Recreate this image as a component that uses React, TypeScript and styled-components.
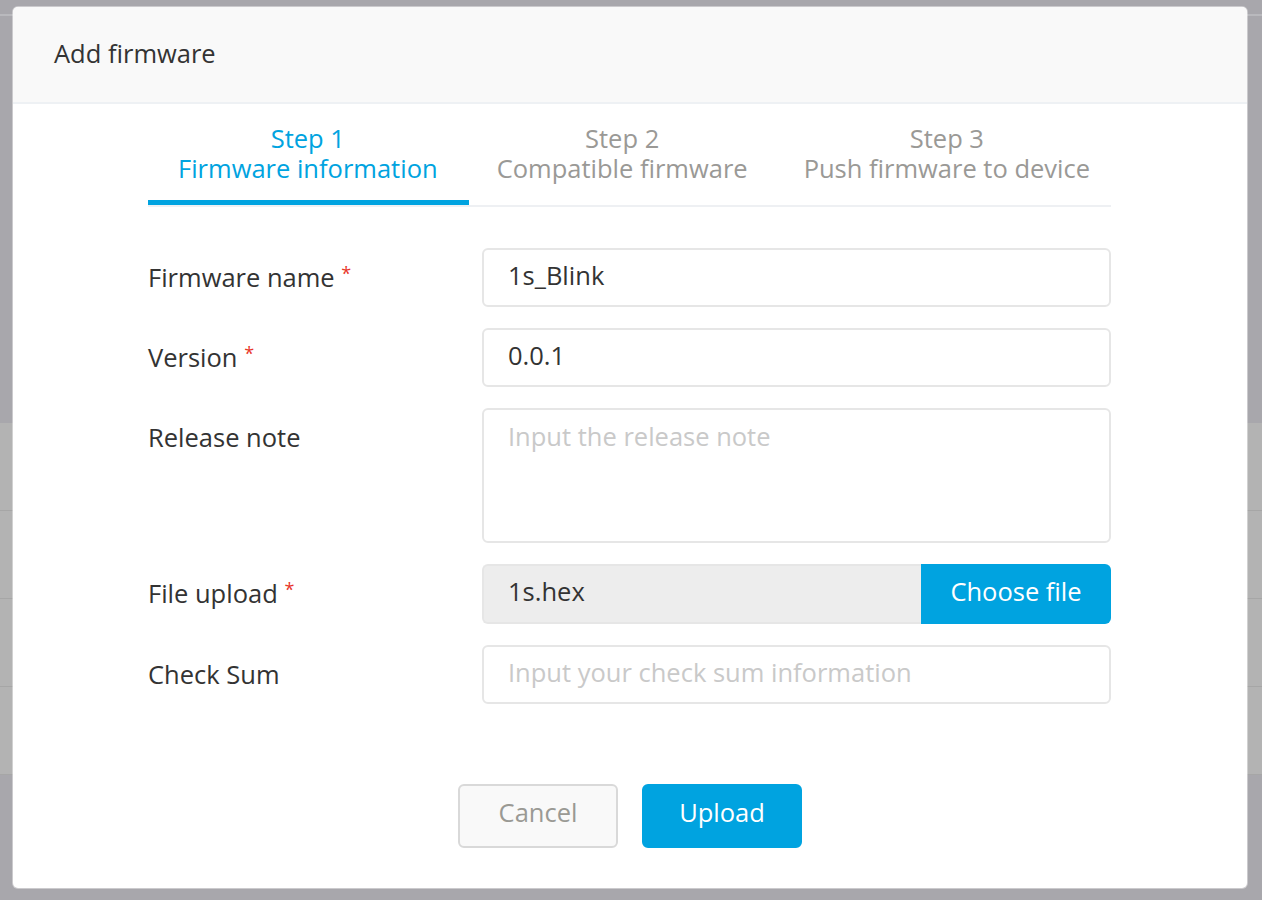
import React from "react";
import styled, { createGlobalStyle } from "styled-components";

const GlobalStyle = createGlobalStyle`
  html, body {
    margin: 0;
    padding: 0;
    height: 100%;
    background: #a8a7ac;
    font-family: "Open Sans", "Noto Sans", sans-serif;
  }
`;

const steps = [
  { title: "Step 1", subtitle: "Firmware information" },
  { title: "Step 2", subtitle: "Compatible firmware" },
  { title: "Step 3", subtitle: "Push firmware to device" },
];

const App = () => {
  return (
    <>
      <GlobalStyle />
      <Backdrop>
        <TopRule />
        <BackTable>
          <BackRow />
          <BackRow />
          <BackRow />
          <BackRow />
        </BackTable>
      </Backdrop>

      <Overlay>
        <Modal>
          <Header>
            <Title>Add firmware</Title>
          </Header>

          <Body>
            <Tabs>
              {steps.map((s, i) => (
                <Tab key={s.title} active={i === 0}>
                  <StepLine>{s.title}</StepLine>
                  <StepLine>{s.subtitle}</StepLine>
                </Tab>
              ))}
            </Tabs>

            <Form>
              <Label>
                Firmware name <Req>*</Req>
              </Label>
              <Input defaultValue="1s_Blink" />

              <Label>
                Version <Req>*</Req>
              </Label>
              <Input defaultValue="0.0.1" />

              <Label>Release note</Label>
              <TextArea placeholder="Input the release note" />

              <Label>
                File upload <Req>*</Req>
              </Label>
              <FileBox>
                <FileName>1s.hex</FileName>
                <ChooseButton>Choose file</ChooseButton>
              </FileBox>

              <Label>Check Sum</Label>
              <Input placeholder="Input your check sum information" />
            </Form>
          </Body>

          <Footer>
            <Button>Cancel</Button>
            <Button primary>Upload</Button>
          </Footer>
        </Modal>
      </Overlay>
    </>
  );
};

/* dimmed page behind the dialog */
const Backdrop = styled.div`
  position: fixed;
  inset: 0;
  background: #a8a7ac;
  overflow: hidden;
`;

const TopRule = styled.div`
  position: absolute;
  top: 14px;
  left: 0;
  right: 0;
  height: 2px;
  background: #b9b9bd;
`;

const BackTable = styled.div`
  position: absolute;
  top: 423px;
  left: 0;
  right: 0;
  height: 352px;
  background: #b3b3b3;
  display: flex;
  flex-direction: column;
`;

const BackRow = styled.div`
  flex: 1;
  border-bottom: 1px solid #a6a6a6;
`;

const Overlay = styled.div`
  position: fixed;
  inset: 0;
  padding: 7px 15px 12px 13px;
  display: flex;
`;

const Modal = styled.div`
  flex: 1;
  background: #ffffff;
  border-radius: 5px;
  overflow: hidden;
  display: flex;
  flex-direction: column;
  box-shadow: 0 0 0 1px rgba(255, 255, 255, 0.4);
`;

const Header = styled.div`
  height: 95px;
  flex-shrink: 0;
  background: #f9f9f9;
  border-bottom: 2px solid #eef1f4;
  display: flex;
  align-items: center;
  padding-left: 41px;
`;

const Title = styled.h2`
  margin: 0;
  margin-top: -4px;
  font-size: 25.5px;
  font-weight: 400;
  color: #333333;
`;

const Body = styled.div`
  flex: 1;
  padding: 0 136px 0 135px;
`;

const Tabs = styled.div`
  display: flex;
  border-bottom: 2px solid #eef0f3;
`;

const Tab = styled.div<{ active?: boolean }>`
  display: flex;
  flex-direction: column;
  align-items: center;
  flex-shrink: 0;
  white-space: nowrap;
  padding: 19px 28px 17px;
  font-size: 25.5px;
  color: ${(p) => (p.active ? "#00a3e0" : "#9a9996")};
  border-bottom: 5px solid ${(p) => (p.active ? "#00a3e0" : "transparent")};
  cursor: pointer;

  &:first-child {
    padding-left: 30px;
    padding-right: 31px;
  }

  &:last-child {
    padding-right: 14px;
  }
`;

const StepLine = styled.span`
  display: block;
  height: 30px;
  line-height: 30px;
  overflow: visible;
`;

const Form = styled.div`
  display: grid;
  grid-template-columns: 334px 1fr;
  row-gap: 21px;
  margin-top: 41px;
`;

const Label = styled.label`
  font-size: 25.5px;
  line-height: 58px;
  height: 58px;
  color: #333333;
  align-self: start;
  white-space: nowrap;
`;

const Req = styled.span`
  position: relative;
  top: -7px;
  color: #e8352a;
  font-size: 18px;
  line-height: 0;
`;

const Input = styled.input`
  height: 59px;
  box-sizing: border-box;
  border: 2px solid #e6e6e6;
  border-radius: 6px;
  padding: 0 24px 5px;
  font-family: inherit;
  font-size: 25.5px;
  color: #333333;
  outline: none;

  &::placeholder {
    color: #c9c9c9;
  }
`;

const TextArea = styled.textarea`
  height: 135px;
  box-sizing: border-box;
  border: 2px solid #e6e6e6;
  border-radius: 6px;
  padding: 10px 24px;
  font-family: inherit;
  font-size: 25.5px;
  line-height: 32px;
  color: #333333;
  outline: none;
  resize: none;

  &::placeholder {
    color: #c9c9c9;
  }
`;

const FileBox = styled.div`
  height: 60px;
  display: flex;
`;

const FileName = styled.div`
  flex: 1;
  display: flex;
  align-items: center;
  padding: 0 24px 6px;
  border: 2px solid #e6e6e6;
  border-right: none;
  border-radius: 6px 0 0 6px;
  background: #ededed;
  font-size: 25.5px;
  color: #333333;
`;

const ChooseButton = styled.button`
  width: 190px;
  padding: 0 0 6px;
  border: none;
  border-radius: 0 6px 6px 0;
  background: #00a3e0;
  color: #ffffff;
  font-family: inherit;
  font-size: 25.5px;
  cursor: pointer;
`;

const Footer = styled.div`
  display: flex;
  justify-content: center;
  gap: 24px;
  padding-bottom: 40px;
`;

const Button = styled.button<{ primary?: boolean }>`
  width: 160px;
  height: 64px;
  box-sizing: border-box;
  padding: 0 0 8px;
  border-radius: 6px;
  border: 2px solid ${(p) => (p.primary ? "#00a3e0" : "#d9d9d9")};
  background: ${(p) => (p.primary ? "#00a3e0" : "#f9f9f9")};
  color: ${(p) => (p.primary ? "#ffffff" : "#9a9994")};
  font-family: inherit;
  font-size: 25.5px;
  cursor: pointer;
`;

export default App;
